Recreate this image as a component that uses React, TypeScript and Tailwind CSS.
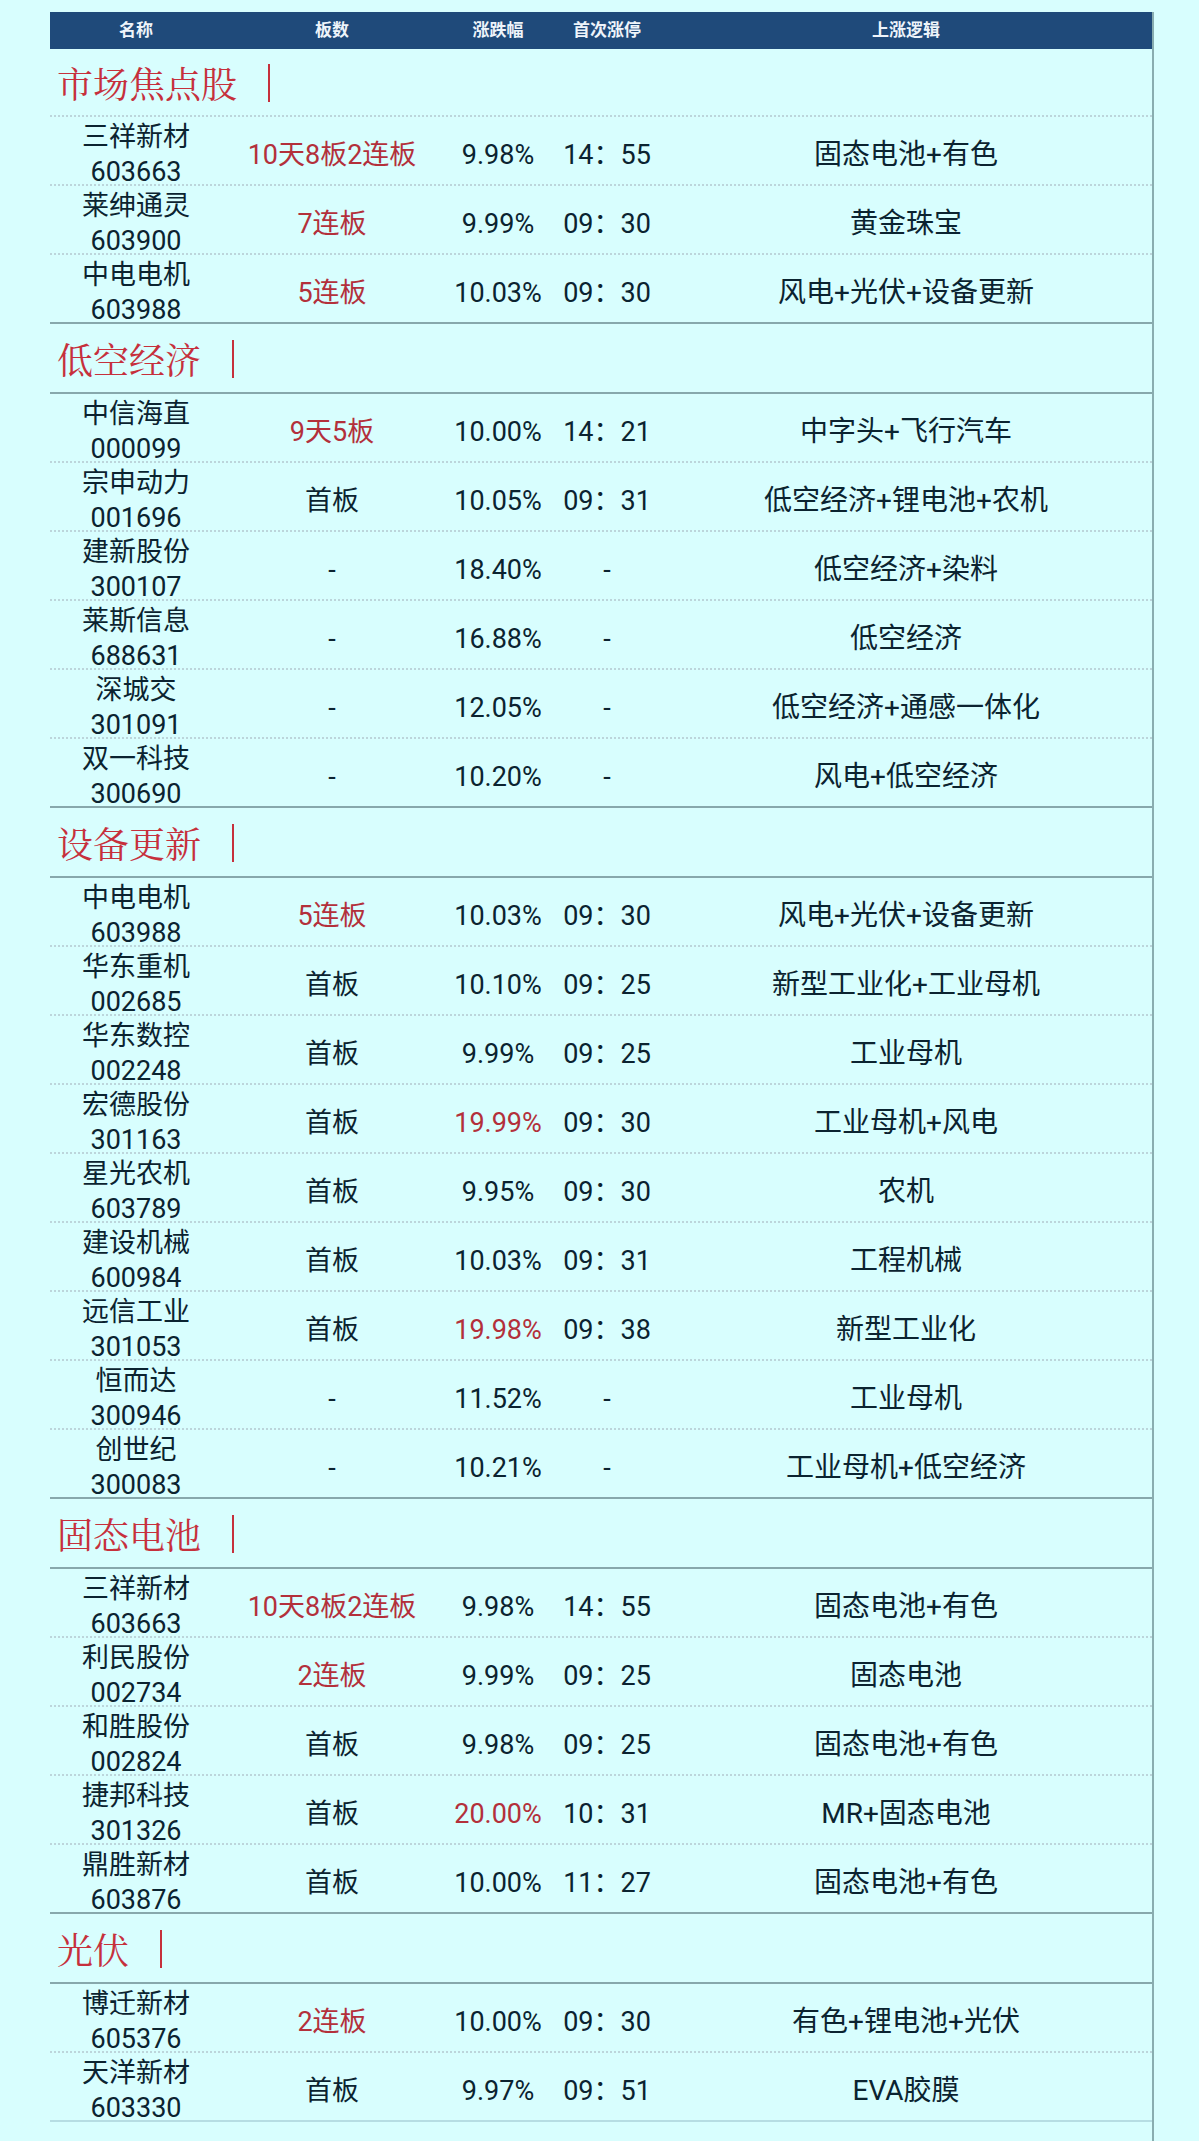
import React from 'react'

type Row = {
  name: string
  code: string
  boards: string
  hotBoards?: boolean
  pct: string
  hotPct?: boolean
  time: string
  logic: string
}

type Section = { title: string; rows: Row[] }

const sections: Section[] = [
  {
    title: '市场焦点股',
    rows: [
      { name: '三祥新材', code: '603663', boards: '10天8板2连板', hotBoards: true, pct: '9.98%', time: '14：55', logic: '固态电池+有色' },
      { name: '莱绅通灵', code: '603900', boards: '7连板', hotBoards: true, pct: '9.99%', time: '09：30', logic: '黄金珠宝' },
      { name: '中电电机', code: '603988', boards: '5连板', hotBoards: true, pct: '10.03%', time: '09：30', logic: '风电+光伏+设备更新' },
    ],
  },
  {
    title: '低空经济',
    rows: [
      { name: '中信海直', code: '000099', boards: '9天5板', hotBoards: true, pct: '10.00%', time: '14：21', logic: '中字头+飞行汽车' },
      { name: '宗申动力', code: '001696', boards: '首板', pct: '10.05%', time: '09：31', logic: '低空经济+锂电池+农机' },
      { name: '建新股份', code: '300107', boards: '-', pct: '18.40%', time: '-', logic: '低空经济+染料' },
      { name: '莱斯信息', code: '688631', boards: '-', pct: '16.88%', time: '-', logic: '低空经济' },
      { name: '深城交', code: '301091', boards: '-', pct: '12.05%', time: '-', logic: '低空经济+通感一体化' },
      { name: '双一科技', code: '300690', boards: '-', pct: '10.20%', time: '-', logic: '风电+低空经济' },
    ],
  },
  {
    title: '设备更新',
    rows: [
      { name: '中电电机', code: '603988', boards: '5连板', hotBoards: true, pct: '10.03%', time: '09：30', logic: '风电+光伏+设备更新' },
      { name: '华东重机', code: '002685', boards: '首板', pct: '10.10%', time: '09：25', logic: '新型工业化+工业母机' },
      { name: '华东数控', code: '002248', boards: '首板', pct: '9.99%', time: '09：25', logic: '工业母机' },
      { name: '宏德股份', code: '301163', boards: '首板', pct: '19.99%', hotPct: true, time: '09：30', logic: '工业母机+风电' },
      { name: '星光农机', code: '603789', boards: '首板', pct: '9.95%', time: '09：30', logic: '农机' },
      { name: '建设机械', code: '600984', boards: '首板', pct: '10.03%', time: '09：31', logic: '工程机械' },
      { name: '远信工业', code: '301053', boards: '首板', pct: '19.98%', hotPct: true, time: '09：38', logic: '新型工业化' },
      { name: '恒而达', code: '300946', boards: '-', pct: '11.52%', time: '-', logic: '工业母机' },
      { name: '创世纪', code: '300083', boards: '-', pct: '10.21%', time: '-', logic: '工业母机+低空经济' },
    ],
  },
  {
    title: '固态电池',
    rows: [
      { name: '三祥新材', code: '603663', boards: '10天8板2连板', hotBoards: true, pct: '9.98%', time: '14：55', logic: '固态电池+有色' },
      { name: '利民股份', code: '002734', boards: '2连板', hotBoards: true, pct: '9.99%', time: '09：25', logic: '固态电池' },
      { name: '和胜股份', code: '002824', boards: '首板', pct: '9.98%', time: '09：25', logic: '固态电池+有色' },
      { name: '捷邦科技', code: '301326', boards: '首板', pct: '20.00%', hotPct: true, time: '10：31', logic: 'MR+固态电池' },
      { name: '鼎胜新材', code: '603876', boards: '首板', pct: '10.00%', time: '11：27', logic: '固态电池+有色' },
    ],
  },
  {
    title: '光伏',
    rows: [
      { name: '博迁新材', code: '605376', boards: '2连板', hotBoards: true, pct: '10.00%', time: '09：30', logic: '有色+锂电池+光伏' },
      { name: '天洋新材', code: '603330', boards: '首板', pct: '9.97%', time: '09：51', logic: 'EVA胶膜' },
    ],
  },
]

const cols = 'grid grid-cols-[172px_220px_112px_106px_1fr] items-center text-center'

function DataRow({ row, last, endOfSection }: { row: Row; last: boolean; endOfSection: boolean }) {
  const line = last
    ? 'border-b-2 border-solid border-[#b6dde3]'
    : endOfSection
      ? 'border-b-2 border-solid border-[#87a8ac]'
      : 'border-b-2 border-dotted border-[#bcd5db]'
  return (
    <div className={`${cols} h-[69px] pt-[3px] ${line} text-[27px] text-[#0b2330]`}>
      <div className="flex flex-col text-[27px] leading-[35px]">
        <span>{row.name}</span>
        <span>{row.code}</span>
      </div>
      <div className={row.hotBoards ? 'text-[#b3303b]' : ''}>{row.boards}</div>
      <div className={row.hotPct ? 'text-[#b3303b]' : ''}>{row.pct}</div>
      <div>{row.time}</div>
      <div className="text-[28px]">{row.logic}</div>
    </div>
  )
}

export default function App() {
  return (
    <div
      className="min-h-[2141px] bg-[#d8fefe] pt-[12px] pl-[50px]"
      style={{ fontFamily: 'Roboto, "Noto Sans CJK SC", sans-serif' }}
    >
      <div className="flex min-h-[2129px] w-[1104px] flex-col border-r-2 border-[#89adb0]">
        <div className={`${cols} h-[37px] bg-[#1f4a7a] text-[17px] font-semibold text-[#eef4fa]`}>
          <div>名称</div>
          <div>板数</div>
          <div>涨跌幅</div>
          <div>首次涨停</div>
          <div>上涨逻辑</div>
        </div>

        {sections.map((s, si) => (
          <div key={s.title}>
            <div
              className={`flex items-center pl-[7px] pt-[2px] ${si === 0 ? 'h-[68px] border-b-2 border-dotted border-[#bcd5db]' : 'h-[70px] border-b-2 border-solid border-[#87a8ac]'}`}
            >
              <span
                className="text-[36px] leading-none text-[#c6303c]"
                style={{ fontFamily: '"Noto Serif CJK SC", "Noto Sans CJK SC", serif' }}
              >
                {s.title}
              </span>
              <span className="ml-[31px] h-[38px] w-[2px] bg-[#c6303c]" />
            </div>
            {s.rows.map((r, ri) => (
              <DataRow
                key={r.code + ri}
                row={r}
                endOfSection={ri === s.rows.length - 1}
                last={si === sections.length - 1 && ri === s.rows.length - 1}
              />
            ))}
          </div>
        ))}
      </div>
    </div>
  )
}
